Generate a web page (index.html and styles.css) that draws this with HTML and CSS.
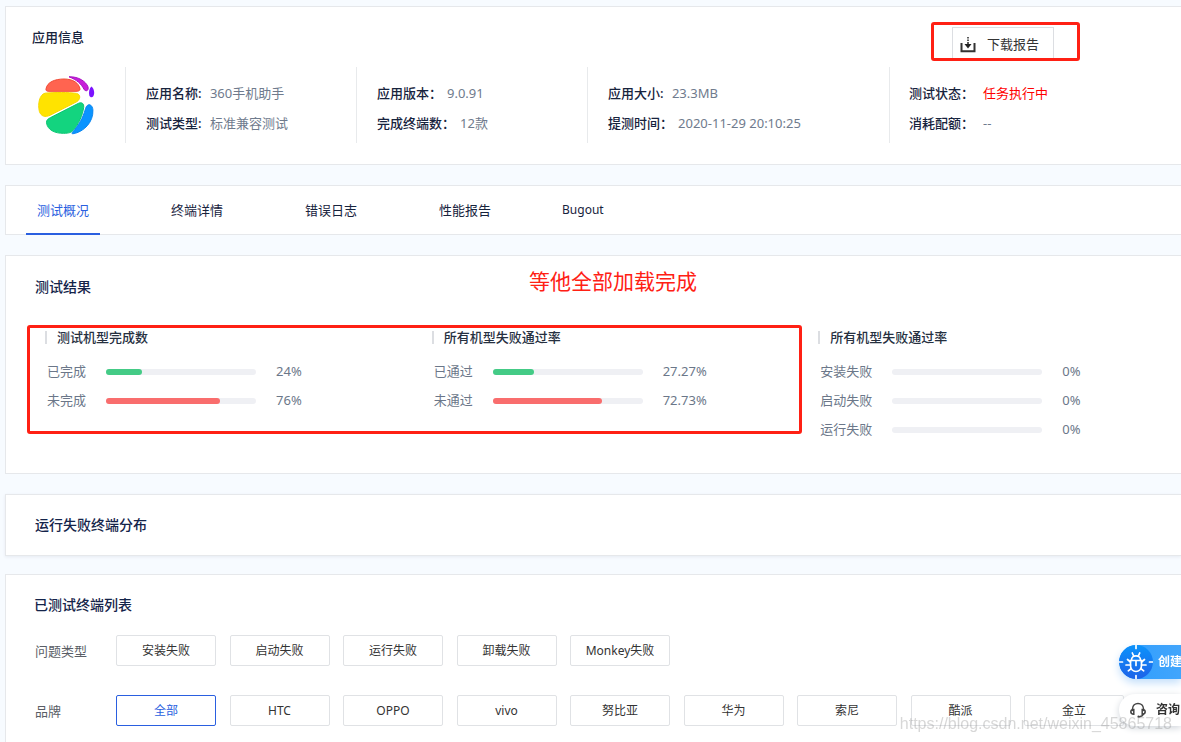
FILE: index.html
```
<!DOCTYPE html>
<html lang="zh-CN">
<head>
<meta charset="utf-8">
<title>测试报告</title>
<link rel="stylesheet" href="styles.css">
</head>
<body>
<main class="page">
  <section class="card app">
    <header class="app-head">
      <h2 class="app-title">应用信息</h2>
      <button class="download" type="button">
        <svg class="download-icon" viewBox="0 0 16 16" width="16" height="16" aria-hidden="true">
          <path d="M1.500 6v8.200h13V6" fill="none" stroke="#333" stroke-width="2"/>
          <path d="M8 0v1.500M8 2.500v1.500M8 5v3" stroke="#333" stroke-width="1.600"/>
          <path d="M4.500 7h7L8 11.500z" fill="#222"/>
        </svg>
        下载报告
      </button>
      <span class="mark mark-download"></span>
    </header>
    <div class="app-body">
      <div class="logo">
        <svg viewBox="0 0 58 60" width="58" height="60" aria-hidden="true">
          <path d="M8 13C9 6 17 3 26 3c9 0 15 4 16 10 0 1.800-1.500 2.300-4 2.300H11c-2.500 0-3.300-.8-3-2.300z" fill="#ff6450" stroke="#f24a35"/>
          <path d="M31 .8c10-.4 17 5 19 10 .8 3.700-1.500 5-3.700 3C43 7.500 39 4 31 .8z" fill="#c81ed8" stroke="#a80fc4"/>
          <path d="M53.300 10.500c2.700 1.800 3.900 6.700 2 9.700-1 1.700-3.300 1.400-4-.7-.7-3.200 0-7.300 2-9z" fill="#7b12ff"/>
          <path d="M7 17.200c10-1 23-1 31.500.2 4.500 1 4 6 .3 8.300L12 39.300c-5 2.200-8.800 1.200-10.600-3.800C-.5 28 1.500 18.500 7 17.200z" fill="#ffe300" stroke="#f6d900"/>
          <path d="M40.500 27.300c3.500-1.400 5.500.2 5.200 4-1 8-5.200 17-10 22.500-2.300 2.700-4.600 3.500-10 3.500-8.700.2-16.200-3.300-17.200-10.500-.2-2.700 1.500-4 4-5.200z" fill="#13d47f" stroke="#0cc572"/>
          <path d="M49.500 29.300c2-1.700 5 .2 5.400 4.500C55.600 46 46 56 34.800 57.800c-.8 0-1-.5-.5-1.300 6.500-7.500 10.400-13.700 13.200-23.700.4-1.600 1-2.700 2-3.500z" fill="#0a94ff" stroke="#0a86f0"/>
        </svg>
      </div>
      <dl class="info">
        <div class="info-row"><dt>应用名称:&nbsp;</dt><dd>360手机助手</dd></div>
        <div class="info-row"><dt>测试类型:&nbsp;</dt><dd>标准兼容测试</dd></div>
      </dl>
      <dl class="info">
        <div class="info-row"><dt>应用版本：</dt><dd>9.0.91</dd></div>
        <div class="info-row"><dt>完成终端数：</dt><dd>12款</dd></div>
      </dl>
      <dl class="info info-wide">
        <div class="info-row"><dt>应用大小:&nbsp;</dt><dd>23.3MB</dd></div>
        <div class="info-row"><dt>提测时间：</dt><dd>2020-11-29 20:10:25</dd></div>
      </dl>
      <dl class="info info-status">
        <div class="info-row"><dt>测试状态：</dt><dd class="running">任务执行中</dd></div>
        <div class="info-row"><dt>消耗配额：</dt><dd>--</dd></div>
      </dl>
    </div>
  </section>

  <nav class="card tabs">
    <a class="tab tab-active" href="#overview">测试概况</a>
    <a class="tab" href="#devices">终端详情</a>
    <a class="tab" href="#errors">错误日志</a>
    <a class="tab" href="#performance">性能报告</a>
    <a class="tab tab-latin" href="#bugout">Bugout</a>
  </nav>

  <section class="card results" id="overview">
    <h2 class="title">测试结果</h2>
    <p class="note">等他全部加载完成</p>
    <span class="mark mark-results"></span>
    <div class="stats">
      <div class="stat">
        <h3 class="stat-title">测试机型完成数</h3>
        <div class="meter"><span>已完成</span><span class="track"><span class="fill good" style="width:24%"></span></span><span>24%</span></div>
        <div class="meter"><span>未完成</span><span class="track"><span class="fill bad" style="width:76%"></span></span><span>76%</span></div>
      </div>
      <div class="stat">
        <h3 class="stat-title">所有机型失败通过率</h3>
        <div class="meter"><span>已通过</span><span class="track"><span class="fill good" style="width:27.27%"></span></span><span>27.27%</span></div>
        <div class="meter"><span>未通过</span><span class="track"><span class="fill bad" style="width:72.73%"></span></span><span>72.73%</span></div>
      </div>
      <div class="stat">
        <h3 class="stat-title">所有机型失败通过率</h3>
        <div class="meter"><span>安装失败</span><span class="track"></span><span>0%</span></div>
        <div class="meter"><span>启动失败</span><span class="track"></span><span>0%</span></div>
        <div class="meter"><span>运行失败</span><span class="track"></span><span>0%</span></div>
      </div>
    </div>
  </section>

  <section class="card spread">
    <h2 class="title">运行失败终端分布</h2>
  </section>

  <section class="card devices" id="devices">
    <h2 class="title">已测试终端列表</h2>
    <div class="filter" role="group" aria-labelledby="filter-type">
      <span class="filter-label" id="filter-type">问题类型</span>
      <div class="chips">
        <button class="chip" type="button">安装失败</button>
        <button class="chip" type="button">启动失败</button>
        <button class="chip" type="button">运行失败</button>
        <button class="chip" type="button">卸载失败</button>
        <button class="chip" type="button">Monkey失败</button>
      </div>
    </div>
    <div class="filter" role="group" aria-labelledby="filter-brand">
      <span class="filter-label" id="filter-brand">品牌</span>
      <div class="chips">
        <button class="chip chip-active" type="button">全部</button>
        <button class="chip" type="button">HTC</button>
        <button class="chip" type="button">OPPO</button>
        <button class="chip" type="button">vivo</button>
        <button class="chip" type="button">努比亚</button>
        <button class="chip" type="button">华为</button>
        <button class="chip" type="button">索尼</button>
        <button class="chip" type="button">酷派</button>
        <button class="chip" type="button">金立</button>
      </div>
    </div>
  </section>
</main>

<aside class="floating">
  <button class="pill pill-create" type="button">
    <svg viewBox="0 0 34 34" width="34" height="34" aria-hidden="true">
      <defs><linearGradient id="disc" x1="0" y1="0" x2="0" y2="1"><stop offset="0" stop-color="#0b93fb"/><stop offset="1" stop-color="#1e62e8"/></linearGradient></defs>
      <circle cx="17" cy="17" r="17" fill="url(#disc)"/>
      <g fill="none" stroke="#fff" stroke-width="1.700" stroke-linecap="round">
        <path d="M17 0v3.500M17 30.500V34M0 17h3.500M30.500 17H34"/>
        <path d="M13.300 8l1.400 3M20.700 8l-1.400 3"/>
        <path d="M12.500 15c0-5.500 9-5.500 9 0"/>
        <path d="M11.500 15.500h11v5c0 8-11 8-11 0zM17 15.500v5"/>
        <path d="M11.500 17L8.500 14.500M22.500 17l3-2.500M11.500 20H7M22.500 20H27M12.300 23.500l-3 2.300M21.700 23.500l3 2.300"/>
      </g>
    </svg>
    创建
  </button>
  <button class="pill pill-ask" type="button">
    <svg viewBox="0 0 16 16" width="16" height="16" aria-hidden="true">
      <g fill="none" stroke="#444" stroke-width="1.500" stroke-linecap="round">
        <path d="M2.500 8.500V7c0-7.500 11-7.500 11 0v1.500"/>
        <path d="M3.800 7.500v4.700C1.500 12.200.8 11 .8 9.800S1.500 7.500 3.800 7.500zM12.200 7.500v4.700c2.300 0 3-1.200 3-2.400s-.7-2.300-3-2.300z"/>
        <path d="M13.500 12.300c-.8 1.700-2 2.200-4 2.400"/>
      </g>
      <circle cx="8.500" cy="14.700" r="1.100" fill="#444"/>
    </svg>
    咨询
  </button>
</aside>
<div class="watermark">https://blog.csdn.net/weixin_45865718</div>
</body>
</html>
```
FILE: styles.css
```
* { box-sizing: border-box; }

body {
  margin: 0;
  background: #f7fbff;
  color: #17233d;
  font: 13px/20px "Noto Sans", "Noto Sans CJK SC", sans-serif;
}

h2, h3, p, dl, dd { margin: 0; }

button {
  padding: 0;
  border: 0;
  background: none;
  color: inherit;
  font: inherit;
  white-space: nowrap;
}

.page {
  display: flex;
  flex-direction: column;
  gap: 20px;
  min-height: 100vh;
  padding: 6px 0 0 5px;
  overflow-x: hidden;
}

.card {
  position: relative;
  background: #fff;
  border: 1px solid #e6e8eb;
  border-right: 0;
}

.title {
  padding-left: 29px;
  font-size: 14px;
  font-weight: 500;
  color: #14244a;
}

/* Application info */
.app { padding-bottom: 21px; }

.app-head {
  position: relative;
  display: flex;
  align-items: center;
  justify-content: space-between;
  height: 60px;
  padding: 0 127px 0 26px;
}

.app-title {
  font-size: 13px;
  font-weight: 500;
}

.download {
  display: flex;
  align-items: center;
  gap: 11px;
  height: 32px;
  margin-top: 12px;
  padding: 2px 14px 0 7px;
  border: 1px solid #dcdee2;
  color: #333;
}

.download-icon { margin-top: 2px; }

.app-body {
  display: flex;
  height: 76px;
}

.logo {
  flex: 0 0 119px;
  padding: 9px 0 0 32px;
}

.info {
  flex: 0 0 231px;
  padding: 11px 0 0 20px;
  border-left: 1px solid #e8eaec;
}

.info-wide { flex-basis: 302px; }

.info-status {
  flex: 1;
  padding-left: 19px;
}

.info-row {
  display: flex;
  gap: 5px;
  line-height: 30px;
  white-space: nowrap;
}

.info-status .info-row { gap: 9px; }
.info dt { font-weight: 500; }
.info dd { color: #6f7b8d; }
.info .running { color: #f00; }

/* Tabs */
.tabs {
  display: flex;
  gap: 60px;
  padding-left: 20px;
}

.tab {
  margin-bottom: -1px;
  padding: 14px 11px 13px;
  border-bottom: 2px solid transparent;
  color: #17233d;
  text-decoration: none;
}

.tab-latin {
  padding-left: 0;
  padding-right: 0;
  font-size: 12px;
}

.tab-active {
  border-color: #2a5fe0;
  color: #2a5fe0;
}

/* Results */
.results { padding: 21px 0 29px; }

.stats {
  display: grid;
  grid-template-columns: 1fr 1fr 1fr;
  margin: 30px -24px 0 0;
  padding-left: 39px;
}

.stat-title {
  margin-bottom: 10px;
  font-size: 13px;
  font-weight: 500;
  color: #26303f;
}

.stat-title::before {
  content: "";
  display: inline-block;
  width: 2px;
  height: 13px;
  margin-right: 10px;
  background: #dcdee2;
  vertical-align: -2px;
}

.meter {
  display: flex;
  align-items: center;
  gap: 20px;
  padding-left: 2px;
  line-height: 29px;
  color: #6b7789;
}

.track {
  width: 150px;
  height: 6px;
  border-radius: 3px;
  background: #eff0f4;
}

.fill {
  display: block;
  height: 6px;
  border-radius: 3px;
}

.good { background: #44cb86; }
.bad { background: #f96d6d; }

/* Red annotations drawn over the page */
.mark {
  position: absolute;
  border: 3px solid #ff2014;
  border-radius: 3px;
  pointer-events: none;
}

.mark-download {
  top: 15px;
  right: 101px;
  width: 149px;
  height: 39px;
}

.mark-results {
  top: 69px;
  left: 21px;
  right: 379px;
  height: 109px;
}

.note {
  position: absolute;
  top: 10px;
  left: 523px;
  color: #ff2014;
  font-size: 21px;
  line-height: 30px;
}

.spread {
  padding: 20px 0;
  box-shadow: 0 1px 3px #e6ebf2;
}

/* Device list */
.devices {
  flex: 1;
  margin-top: -2px;
  padding-top: 20px;
  border-bottom: 0;
}

.devices .title { padding-left: 28px; }

.filter {
  display: flex;
  align-items: center;
  margin-top: 29px;
}

.title + .filter { margin-top: 20px; }

.filter-label {
  flex: 0 0 110px;
  padding-left: 29px;
  color: #5a5e66;
}

.chips {
  flex: 1;
  display: grid;
  grid-template-columns: repeat(9, 100px);
  justify-content: space-between;
  padding-right: 57px;
}

.chip {
  height: 31px;
  border: 1px solid #e0e2e5;
  border-radius: 2px;
  color: #333;
  font-size: 12px;
}

.chip-active {
  border-color: #2a5fe0;
  color: #2a5fe0;
}

/* Floating actions */
.floating {
  position: fixed;
  right: 0;
  bottom: 16px;
  display: flex;
  flex-direction: column;
  gap: 15px;
  width: 62px;
}

.pill {
  display: flex;
  align-items: center;
  border-radius: 17px 0 0 17px;
  font-size: 12px;
  font-weight: 700;
  overflow: hidden;
}

.pill svg { flex: none; }

.pill-create {
  gap: 5px;
  height: 34px;
  background: linear-gradient(90deg, #2f9dfd, #41a5fc);
  box-shadow: 0 4px 8px #c3dffb;
  color: #fff;
}

.pill-ask {
  gap: 10px;
  height: 32px;
  padding-left: 11px;
  background: #fff;
  box-shadow: 0 2px 7px #cfd4da;
  color: #333;
}

.watermark {
  position: fixed;
  right: 9px;
  bottom: 8px;
  color: rgba(130, 130, 130, .32);
  font: 16px/20px "Liberation Sans", sans-serif;
  pointer-events: none;
}
```
